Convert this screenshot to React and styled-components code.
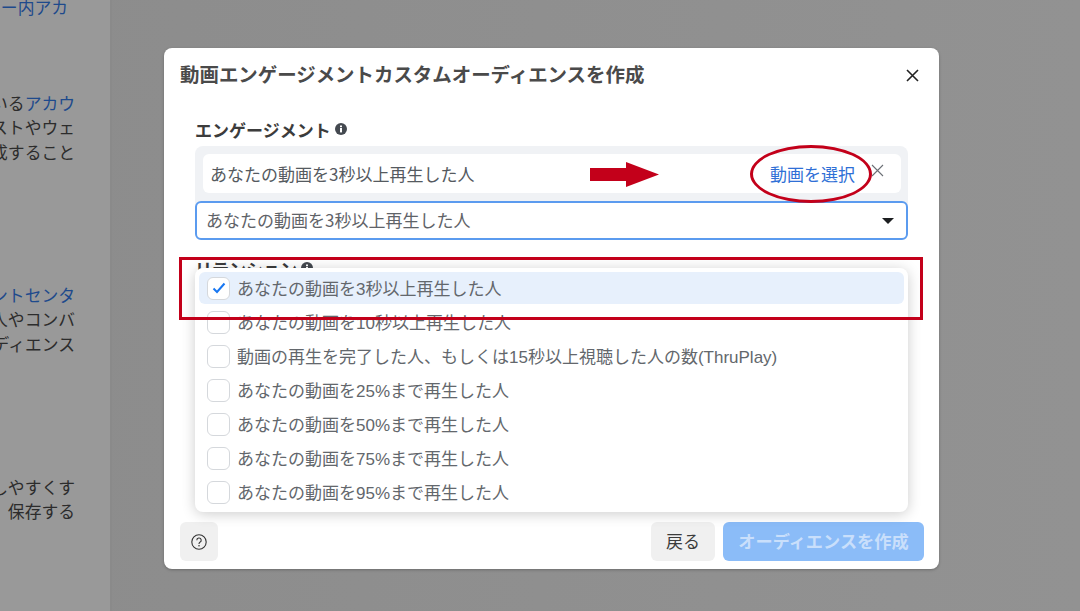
import React from "react";
import styled, { createGlobalStyle } from "styled-components";

const GlobalStyle = createGlobalStyle`
  html, body {
    margin: 0;
    padding: 0;
    height: 100%;
    overflow: hidden;
    font-family: "Noto Sans CJK JP", "Noto Sans", sans-serif;
  }
`;

const Page = styled.div`
  position: relative;
  display: flex;
  width: 1080px;
  height: 611px;
  overflow: hidden;
  background: linear-gradient(90deg, #8c8c8c, #929292);
`;

const Side = styled.aside`
  width: 112px;
  height: 620px;
  flex-shrink: 0;
  box-sizing: border-box;
  padding: 0 35px 0 0;
  margin-top: -5px;
  background: #999999;
  border-right: 2px solid #8a8a8a;
  display: flex;
  flex-direction: column;
  align-items: flex-end;
  color: #2c2c2c;
  font-size: 16.8px;
  line-height: 24.4px;
  text-align: right;
`;

const SideBlock = styled.div`
  white-space: nowrap;
  margin-top: ${(p) => p.$top || 0}px;
  margin-right: ${(p) => p.$right || 0}px;
`;

const SideLink = styled.span`
  color: #1e4a8c;
`;

const Modal = styled.section`
  position: absolute;
  left: 164px;
  top: 48px;
  width: 775px;
  height: 521px;
  box-sizing: border-box;
  display: flex;
  flex-direction: column;
  background: #fff;
  border-radius: 8px;
  box-shadow: 0 1px 3px rgba(0, 0, 0, 0.25);
  color: #444950;
`;

const Header = styled.header`
  display: flex;
  align-items: center;
  justify-content: space-between;
  height: 52px;
  padding: 0 20px 0 16px;
`;

const Title = styled.h1`
  margin: 0;
  font-size: 19.45px;
  font-weight: 700;
  color: #4a4a4a;
  line-height: 52px;
`;

const CloseIcon = styled.svg`
  margin-top: 2px;
`;

const Body = styled.div`
  flex: 1;
  padding: 17px 31px 0;
  position: relative;
`;

const Label = styled.div`
  display: flex;
  align-items: center;
  gap: 4px;
  height: 24px;
  font-size: 17px;
  font-weight: 700;
  color: #3c3c3c;
  margin-top: ${(p) => p.$top || 0}px;
`;

const EngagementBox = styled.div`
  margin-top: 5px;
  background: #f0f2f5;
  border-radius: 8px;
  padding: 8px 0 0;
  display: flex;
  flex-direction: column;
  gap: 8px;
`;

const SelectedRow = styled.div`
  display: flex;
  align-items: center;
  justify-content: space-between;
  height: 39px;
  margin: 0 7px 0 8px;
  padding: 0 17px 0 7px;
  background: #fff;
  border-radius: 6px;
  font-size: 17px;
  color: #555a60;
`;

const RowRight = styled.div`
  display: flex;
  align-items: flex-start;
  gap: 16px;
`;

const PickVideo = styled.a`
  color: #2f6fd6;
  font-size: 17px;
  line-height: 38px;
`;

const SmallClose = styled.span`
  display: flex;
  margin-top: 9px;
`;

const SelectBox = styled.div`
  display: flex;
  align-items: center;
  justify-content: space-between;
  height: 39px;
  box-sizing: border-box;
  padding: 0 12px 2px 9px;
  background: #fff;
  border: 2px solid #5b9bef;
  border-radius: 6px;
  font-size: 17px;
  color: #5f6368;
`;

const Caret = styled.span`
  width: 0;
  height: 0;
  margin-top: 2px;
  border-left: 6px solid transparent;
  border-right: 6px solid transparent;
  border-top: 6px solid #1c1e21;
`;

const Menu = styled.div`
  position: absolute;
  left: 31px;
  top: 168px;
  width: 713px;
  height: 244px;
  box-sizing: border-box;
  padding: 4px 4px 0 4px;
  background: #fff;
  border-radius: 8px;
  box-shadow: 0 2px 14px rgba(0, 0, 0, 0.2);
  display: flex;
  flex-direction: column;
  gap: 2px;
`;

const Option = styled.div`
  display: flex;
  align-items: center;
  gap: 7px;
  height: 32px;
  padding-left: 8px;
  border-radius: 6px;
  background: ${(p) => (p.$active ? "#e7f0fc" : "transparent")};
  font-family: "Liberation Sans", "Noto Sans CJK JP", sans-serif;
  font-size: 17px;
  color: #63676c;
  white-space: nowrap;
`;

const OptionText = styled.span`
  padding-bottom: 2px;
`;

const Check = styled.span`
  width: 23px;
  height: 23px;
  box-sizing: border-box;
  display: flex;
  align-items: center;
  justify-content: center;
  background: #fff;
  border: 1px solid #d5d8dc;
  border-radius: 6px;
`;

const Footer = styled.footer`
  display: flex;
  align-items: center;
  justify-content: space-between;
  padding: 0 15px 8px 16px;
`;

const FooterRight = styled.div`
  display: flex;
  gap: 8px;
`;

const GreyButton = styled.button`
  display: flex;
  align-items: center;
  justify-content: center;
  width: ${(p) => p.$w}px;
  height: 39px;
  padding: 0 0 ${(p) => p.$lift || 0}px;
  border: 0;
  border-radius: 6px;
  background: #f0f0f0;
  color: #3c3c3c;
  font: 400 17px "Noto Sans CJK JP", sans-serif;
`;

const CreateButton = styled.button`
  width: 201px;
  height: 39px;
  padding: 0 0 2px;
  border: 0;
  border-radius: 6px;
  background: #8bbcf8;
  color: #c9dffb;
  font: 700 17.2px "Noto Sans CJK JP", sans-serif;
`;

const RedFrame = styled.div`
  position: absolute;
  left: 179px;
  top: 257px;
  width: 744px;
  height: 63px;
  box-sizing: border-box;
  border: 3px solid #c3001a;
  pointer-events: none;
`;

const RedEllipse = styled.div`
  position: absolute;
  left: 750px;
  top: 145px;
  width: 122px;
  height: 58px;
  box-sizing: border-box;
  border: 3px solid #c3001a;
  border-radius: 50%;
  pointer-events: none;
`;

const RedArrow = styled.svg`
  position: absolute;
  left: 590px;
  top: 162px;
`;

const InfoIcon = () => (
  <svg width="12" height="12" viewBox="0 0 12 12">
    <circle cx="6" cy="6" r="6" fill="#444950" />
    <rect x="5" y="5" width="2" height="4.4" fill="#fff" />
    <rect x="5" y="2.5" width="2" height="1.7" fill="#fff" />
  </svg>
);

const options = [
  "あなたの動画を3秒以上再生した人",
  "あなたの動画を10秒以上再生した人",
  "動画の再生を完了した人、もしくは15秒以上視聴した人の数(ThruPlay)",
  "あなたの動画を25%まで再生した人",
  "あなたの動画を50%まで再生した人",
  "あなたの動画を75%まで再生した人",
  "あなたの動画を95%まで再生した人",
];

export default function App() {
  return (
    <Page>
      <GlobalStyle />
      <Side>
        <SideBlock $right={7}>
          <SideLink>ー内アカ</SideLink>
        </SideBlock>
        <SideBlock $top={71.6}>
          いる<SideLink>アカウ</SideLink>
          <br />
          ストやウェ
          <br />
          成すること
        </SideBlock>
        <SideBlock $top={118.8}>
          <SideLink>ントセンタ</SideLink>
          <br />
          人やコンバ
          <br />
          ディエンス
        </SideBlock>
        <SideBlock $top={118.8}>
          しやすくす
          <br />
          保存する
        </SideBlock>
      </Side>

      <Modal>
        <Header>
          <Title>動画エンゲージメントカスタムオーディエンスを作成</Title>
          <CloseIcon width="13" height="13" viewBox="0 0 13 13">
            <path d="M1 1 L12 12 M12 1 L1 12" stroke="#222" strokeWidth="1.6" />
          </CloseIcon>
        </Header>
        <Body>
          <Label>
            エンゲージメント
            <InfoIcon />
          </Label>
          <EngagementBox>
            <SelectedRow>
              あなたの動画を3秒以上再生した人
              <RowRight>
                <PickVideo>動画を選択</PickVideo>
                <SmallClose>
                  <svg width="13" height="13" viewBox="0 0 13 13">
                    <path d="M1 1 L12 12 M12 1 L1 12" stroke="#6b6f75" strokeWidth="1.1" />
                  </svg>
                </SmallClose>
              </RowRight>
            </SelectedRow>
            <SelectBox>
              あなたの動画を3秒以上再生した人
              <Caret />
            </SelectBox>
          </EngagementBox>
          <Label $top={16}>
            リテンション
            <InfoIcon />
          </Label>
          <Menu>
            {options.map((text, i) => (
              <Option key={text} $active={i === 0}>
                <Check>
                  {i === 0 && (
                    <svg width="14" height="12" viewBox="0 0 14 12">
                      <path d="M1.5 6.5 L5 10 L12.5 1.5" fill="none" stroke="#1877f2" strokeWidth="2" />
                    </svg>
                  )}
                </Check>
                <OptionText>{text}</OptionText>
              </Option>
            ))}
          </Menu>
        </Body>
        <Footer>
          <GreyButton $w={38}>
            <svg width="16" height="16" viewBox="0 0 16 16">
              <circle cx="8" cy="8" r="7.2" fill="none" stroke="#333" strokeWidth="1.1" />
              <path d="M5.8 6.2 A2.2 2.2 0 1 1 8.9 8.2 C8.2 8.6 8 9 8 9.9" fill="none" stroke="#333" strokeWidth="1.1" />
              <circle cx="8" cy="11.8" r="0.8" fill="#333" />
            </svg>
          </GreyButton>
          <FooterRight>
            <GreyButton $w={64} $lift={2}>戻る</GreyButton>
            <CreateButton>オーディエンスを作成</CreateButton>
          </FooterRight>
        </Footer>
      </Modal>

      <RedFrame />
      <RedEllipse />
      <RedArrow width="69" height="25" viewBox="0 0 69 25">
        <path d="M0 6 H36 V0 L69 12.5 L36 25 V19 H0 Z" fill="#c3001a" />
      </RedArrow>
    </Page>
  );
}
